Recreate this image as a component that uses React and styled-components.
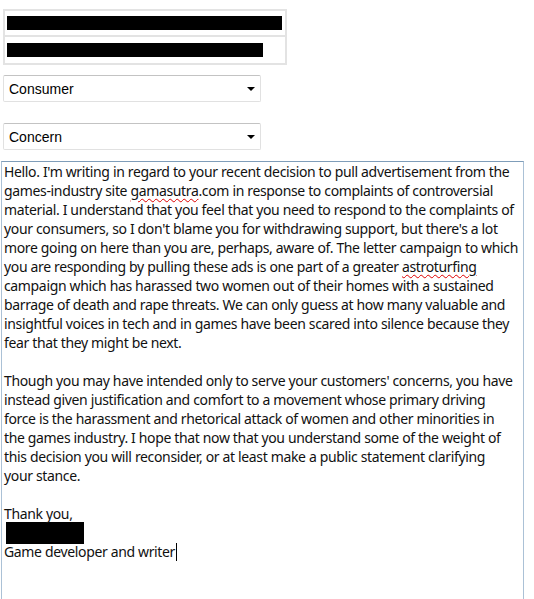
import styled, { createGlobalStyle } from "styled-components";

const Global = createGlobalStyle`
  html, body { margin: 0; padding: 0; background: #fff; }
  body { font-family: "Liberation Sans", Arial, sans-serif; overflow: hidden; }
`;

const LETTER = [
  "Hello. I'm writing in regard to your recent decision to pull advertisement from the",
  ["games-industry site ", { typo: "gamasutra" }, ".com in response to complaints of controversial"],
  "material. I understand that you feel that you need to respond to the complaints of",
  "your consumers, so I don't blame you for withdrawing support, but there's a lot",
  "more going on here than you are, perhaps, aware of. The letter campaign to which",
  ["you are responding by pulling these ads is one part of a greater ", { typo: "astroturfing" }],
  "campaign which has harassed two women out of their homes with a sustained",
  "barrage of death and rape threats. We can only guess at how many valuable and",
  "insightful voices in tech and in games have been scared into silence because they",
  "fear that they might be next.",
  "",
  "Though you may have intended only to serve your customers' concerns, you have",
  "instead given justification and comfort to a movement whose primary driving",
  "force is the harassment and rhetorical attack of women and other minorities in",
  "the games industry. I hope that now that you understand some of the weight of",
  "this decision you will reconsider, or at least make a public statement clarifying",
  "your stance.",
  "",
  "Thank you,",
];

export default function App() {
  return (
    <Page>
      <Global />
      <FieldGroup>
        <Field><Redacted $w={275} /></Field>
        <Field><Redacted $w={256} /></Field>
      </FieldGroup>
      <SelectWrap $mt={10}>
        <Select defaultValue="consumer">
          <option value="consumer">Consumer</option>
        </Select>
        <Arrow width="8" height="4" viewBox="0 0 8 4"><path d="M0 0h8L4 4z" fill="#000" /></Arrow>
      </SelectWrap>
      <SelectWrap $mt={21}>
        <Select defaultValue="concern">
          <option value="concern">Concern</option>
        </Select>
        <Arrow width="8" height="4" viewBox="0 0 8 4"><path d="M0 0h8L4 4z" fill="#000" /></Arrow>
      </SelectWrap>
      <Message>
        {LETTER.map((line, i) => (
          <Line key={i}>
            {Array.isArray(line)
              ? line.map((part, j) =>
                  typeof part === "string" ? part : <Typo key={j}>{part.typo}</Typo>
                )
              : line || "\u00a0"}
          </Line>
        ))}
        <SignBar />
        <Line>Game developer and writer<Caret /></Line>
      </Message>
    </Page>
  );
}

const Page = styled.div`
  display: flex;
  flex-direction: column;
  align-items: flex-start;
  padding-top: 9px;
  height: 599px;
  box-sizing: border-box;
`;

const FieldGroup = styled.div`
  margin-left: 3px;
  width: 284px;
  box-sizing: border-box;
  border: 2px solid #e3e3e3;
  display: flex;
  flex-direction: column;
`;

const Field = styled.div`
  height: 26px;
  display: flex;
  align-items: center;
  padding-left: 2px;
  &:first-child { border-bottom: 2px solid #e3e3e3; height: 24px; }
`;

const Redacted = styled.span`
  display: block;
  width: ${(p) => p.$w}px;
  height: 14px;
  background: #000;
`;

const SelectWrap = styled.div`
  position: relative;
  margin: ${(p) => p.$mt}px 0 0 3px;
  width: 258px;
`;

const Select = styled.select`
  appearance: none;
  display: block;
  width: 100%;
  height: 27px;
  box-sizing: border-box;
  margin: 0;
  padding: 0 0 0 5px;
  border: 1px solid #e1e1e1;
  border-top-color: #c3c3c3;
  border-radius: 2px;
  background: #fff;
  color: #000;
  font-family: "Liberation Sans", Arial, sans-serif;
  font-size: 14px;
  outline: none;
`;

const Arrow = styled.svg`
  position: absolute;
  right: 6px;
  top: 12px;
  pointer-events: none;
`;

const Message = styled.div`
  margin: 11px 0 0 1px;
  width: 523px;
  flex: 1;
  box-sizing: border-box;
  border: 1px solid #abc1d6;
  border-top-color: #7f9db9;
  border-bottom: none;
  padding: 0 0 0 2px;
  font-family: "Noto Sans", "Open Sans", sans-serif;
  font-size: 14px;
  letter-spacing: -0.35px;
  line-height: 19px;
  color: #111;
  overflow: hidden;
`;

const Line = styled.div`
  white-space: pre;
  height: 19px;
`;

const Typo = styled.span`
  text-decoration: underline wavy #d00;
  text-decoration-thickness: 1px;
  text-underline-offset: 2px;
`;

const SignBar = styled.div`
  width: 78px;
  height: 22px;
  margin: -1px 0 -2px 2px;
  background: #000;
`;

const Caret = styled.span`
  display: inline-block;
  width: 1px;
  height: 18px;
  margin-left: 1px;
  vertical-align: -4px;
  background: #000;
`;
